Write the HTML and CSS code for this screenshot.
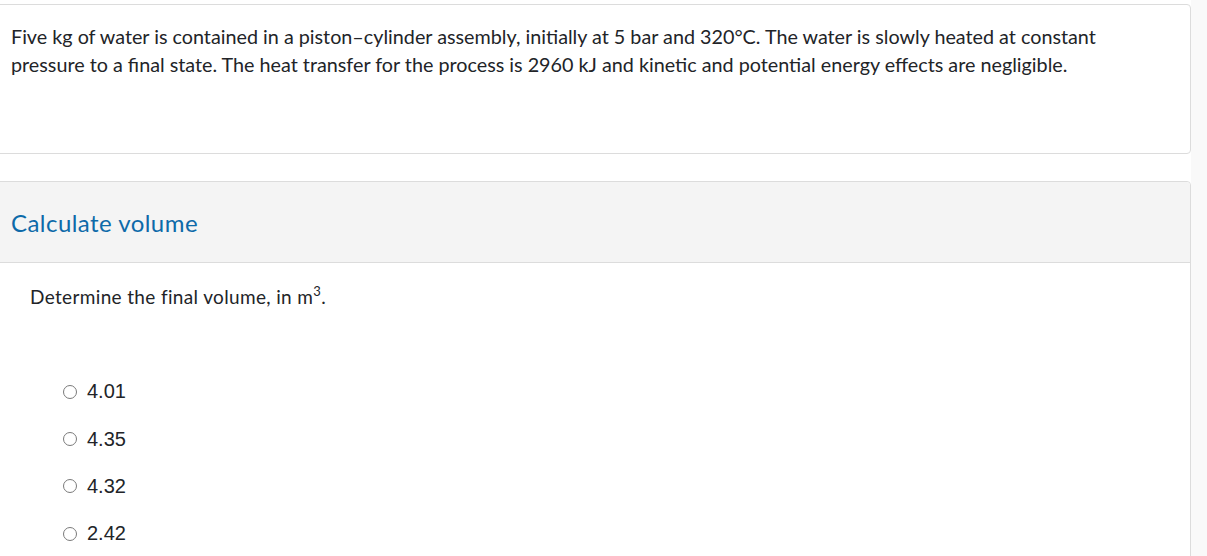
FILE: index.html
```html
<!DOCTYPE html>
<html>
<head>
<meta charset="utf-8">
<link rel="stylesheet" href="styles.css">
</head>
<body>
<div class="page">
  <main class="main">
    <section class="card intro">
      <p class="intro-text">Five kg of water is contained in a piston–cylinder assembly, initially at 5 bar and 320°C. The water is slowly heated at constant pressure to a final state. The heat transfer for the process is 2960 kJ and kinetic and potential energy effects are negligible.</p>
    </section>
    <section class="card question">
      <header class="q-header">
        <h2 class="q-title">Calculate volume</h2>
      </header>
      <div class="q-body">
        <p class="q-text">Determine the final volume, in m<sup>3</sup>.</p>
        <ul class="answers">
          <li class="answer"><span class="radio"></span><span class="label">4.01</span></li>
          <li class="answer"><span class="radio"></span><span class="label">4.35</span></li>
          <li class="answer"><span class="radio"></span><span class="label">4.32</span></li>
          <li class="answer"><span class="radio"></span><span class="label">2.42</span></li>
        </ul>
      </div>
    </section>
  </main>
  <aside class="side"></aside>
</div>
</body>
</html>
```
FILE: styles.css
```css
html, body {
  margin: 0;
  padding: 0;
  background: #ffffff;
  height: 556px;
  overflow: hidden;
}
body {
  font-family: Lato, "Noto Sans", sans-serif;
  color: #222428;
}
.page {
  display: flex;
  height: 556px;
}
.main {
  width: 1191px;
  flex: none;
  overflow: hidden;
}
.side {
  flex: 1;
  background: #f9f9f9;
}
.card {
  border: 1px solid #dcdcdc;
  border-radius: 4px;
  margin-left: -6px;
  background: #fff;
}
.intro {
  margin-top: 4px;
  height: 148px;
  box-sizing: content-box;
}
.intro-text {
  margin: 0;
  padding: 18px 24px 0 16px;
  font-size: 19.75px;
  line-height: 28px;
}
.question {
  margin-top: 27px;
  height: 400px;
}
.q-header {
  background: #f4f4f4;
  height: 80px;
  border-bottom: 1px solid #dcdcdc;
  display: flex;
  align-items: center;
  padding-left: 16px;
  border-radius: 4px 4px 0 0;
}
.q-title {
  margin: 0;
  font-weight: 400;
  font-size: 24px;
  letter-spacing: 0.45px;
  color: #0d6aa9;
}
.q-body {
  padding: 20px 0 0 35px;
}
.q-text {
  margin: 0;
  font-size: 19px;
  letter-spacing: 0.35px;
  line-height: 28px;
}
.q-text sup {
  font-size: 13px;
  line-height: 0;
  vertical-align: 8px;
}
.answers {
  list-style: none;
  margin: 57px 0 0 0;
  padding: 0 0 0 33px;
}
.answer {
  display: flex;
  align-items: center;
  height: 47.4px;
}
.radio {
  width: 12px;
  height: 12px;
  border: 1px solid #7a7a7a;
  border-radius: 50%;
  margin-right: 10px;
  flex: none;
}
.label {
  font-family: "Liberation Sans", Arial, sans-serif;
  font-size: 20px;
}
```
